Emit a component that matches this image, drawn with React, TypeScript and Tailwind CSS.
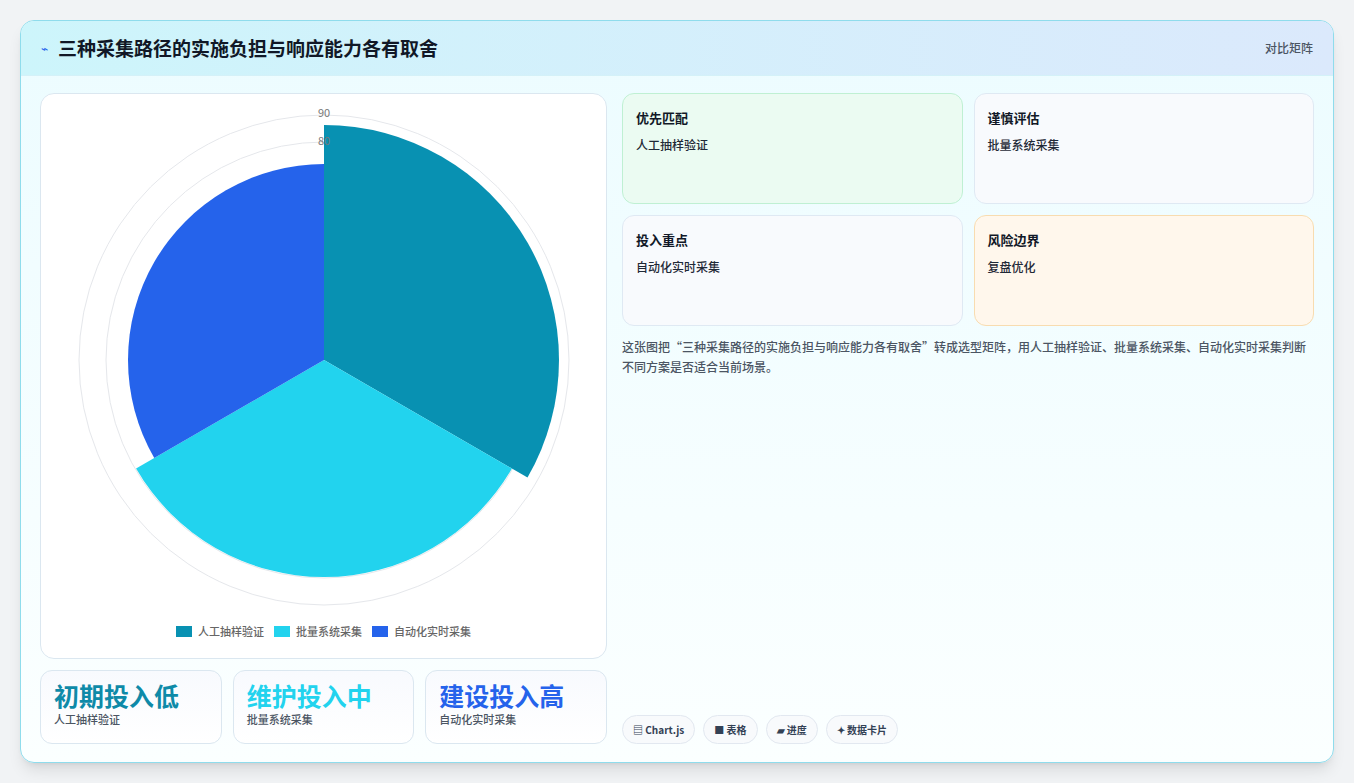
import React from "react";

const cx = 283, cy = 266;
function wedge(a0: number, a1: number, r: number) {
  const rad = (d: number) => (d * Math.PI) / 180;
  const x0 = cx + r * Math.cos(rad(a0)), y0 = cy + r * Math.sin(rad(a0));
  const x1 = cx + r * Math.cos(rad(a1)), y1 = cy + r * Math.sin(rad(a1));
  return `M${cx} ${cy} L${x0} ${y0} A${r} ${r} 0 0 1 ${x1} ${y1} Z`;
}

const font = { fontFamily: '"Noto Sans CJK SC", "Noto Sans", sans-serif' };

export default function App() {
  return (
    <div className="w-[1354px] h-[783px] bg-[#f1f3f5] pt-[20px] pl-[20px]" style={font}>
      <div className="w-[1314px] h-[743px] rounded-[14px] border border-[#8fdcec] overflow-hidden flex flex-col bg-gradient-to-b from-[#ecfcff] to-[#fbffff] shadow-lg">
        <div className="h-[55px] shrink-0 flex items-center justify-between px-[20px] bg-gradient-to-r from-[#cdf5fb] to-[#dbe9fc] border-b border-[#d4f1f8]">
          <div className="flex items-center gap-[10px]">
            <span className="text-[#2563eb] text-[12px]">⌁</span>
            <span className="text-[19px] font-bold text-[#111827]">三种采集路径的实施负担与响应能力各有取舍</span>
          </div>
          <span className="text-[12px] text-[#4b5563] font-medium">对比矩阵</span>
        </div>
        <div className="flex-1 flex gap-[15px] px-[19px] pt-[17px] pb-[18px]">
          <div className="w-[567px] flex flex-col gap-[11px]">
            <div className="h-[566px] rounded-[14px] border border-[#dbe7f0] bg-white flex flex-col items-center">
              <svg width="566" height="525" viewBox="0 0 566 525">
                <circle cx={cx} cy={cy} r={245} fill="none" stroke="#e5e7eb" />
                <circle cx={cx} cy={cy} r={218} fill="none" stroke="#e5e7eb" />
                <path d={wedge(-90, 30, 235)} fill="#0891b2" />
                <path d={wedge(30, 150, 217)} fill="#22d3ee" />
                <path d={wedge(150, 270, 196)} fill="#2563eb" />
                <text x={283} y={23} textAnchor="middle" fontSize="11" fill="#777">90</text>
                <text x={283} y={51} textAnchor="middle" fontSize="11" fill="#777">80</text>
              </svg>
              <div className="flex items-center gap-[10px] text-[11px] text-[#666] font-medium mt-[4px]">
                <span className="flex items-center gap-[6px]"><span className="w-[16px] h-[11px] bg-[#0891b2]" />人工抽样验证</span>
                <span className="flex items-center gap-[6px]"><span className="w-[16px] h-[11px] bg-[#22d3ee]" />批量系统采集</span>
                <span className="flex items-center gap-[6px]"><span className="w-[16px] h-[11px] bg-[#2563eb]" />自动化实时采集</span>
              </div>
            </div>
            <div className="grid grid-cols-3 gap-[11px]">
              {[
                ["初期投入低", "人工抽样验证", "text-[#0e8aa8]"],
                ["维护投入中", "批量系统采集", "text-[#22d3ee]"],
                ["建设投入高", "自动化实时采集", "text-[#2563eb]"],
              ].map(([a, b, c]) => (
                <div key={a} className="h-[74px] rounded-[12px] border border-[#dbe7f0] bg-gradient-to-b from-[#f8fafe] to-white px-[13px] pt-[8px]">
                  <div className={`text-[25px] leading-[32px] font-bold ${c}`}>{a}</div>
                  <div className="text-[11px] text-[#4b5563] font-medium">{b}</div>
                </div>
              ))}
            </div>
          </div>
          <div className="flex-1 flex flex-col">
            <div className="grid grid-cols-2 gap-[11px]">
              {[
                ["优先匹配", "人工抽样验证", "bg-[#ebfbf2] border-[#bff0d3]"],
                ["谨慎评估", "批量系统采集", "bg-[#f8fafd] border-[#dfe9f3]"],
                ["投入重点", "自动化实时采集", "bg-[#f8fafd] border-[#dfe9f3]"],
                ["风险边界", "复盘优化", "bg-[#fff7ec] border-[#f8dcb0]"],
              ].map(([a, b, c]) => (
                <div key={a} className={`h-[111px] rounded-[12px] border px-[13px] pt-[14px] ${c}`}>
                  <div className="text-[13px] font-bold text-[#111827]">{a}</div>
                  <div className="text-[12px] font-medium text-[#1f2937] mt-[8px]">{b}</div>
                </div>
              ))}
            </div>
            <p className="mt-[11px] text-[12px] leading-[20px] text-[#4b5563] font-medium">
              这张图把“三种采集路径的实施负担与响应能力各有取舍”转成选型矩阵，用人工抽样验证、批量系统采集、自动化实时采集判断不同方案是否适合当前场景。
            </p>
            <div className="mt-auto flex gap-[8px]">
              {["▤ Chart.js", "■ 表格", "▰ 进度", "✦ 数据卡片"].map((t) => (
                <span key={t} className="h-[29px] px-[10px] flex items-center rounded-full border border-[#e2e8f0] bg-[#f8fafc] text-[10px] font-bold text-[#334155]">{t}</span>
              ))}
            </div>
          </div>
        </div>
      </div>
    </div>
  );
}
